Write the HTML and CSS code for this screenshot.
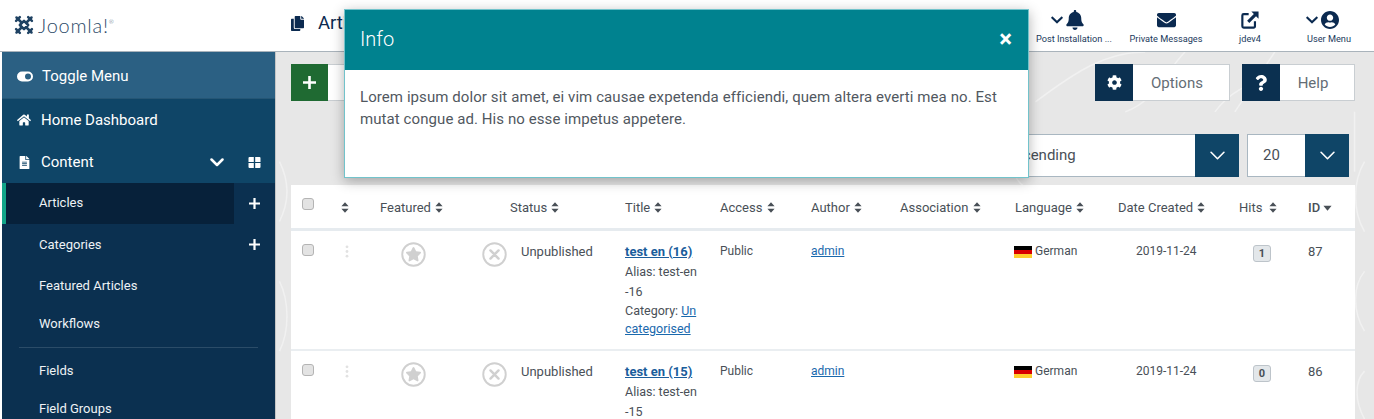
FILE: index.html
```html
<!DOCTYPE html>
<html lang="en">
<head>
<meta charset="utf-8">
<title>Articles</title>
<link rel="stylesheet" href="styles.css">
</head>
<body>
<svg class="defs" aria-hidden="true">
  <defs>
    <symbol id="i-chev" viewBox="0 0 448 512"><path d="M207.029 381.476L12.686 187.132c-9.373-9.373-9.373-24.569 0-33.941l22.667-22.667c9.357-9.357 24.522-9.375 33.901-.04L224 284.505l154.745-154.021c9.379-9.335 24.544-9.317 33.901.04l22.667 22.667c9.373 9.373 9.373 24.569 0 33.941L240.971 381.476c-9.373 9.372-24.569 9.372-33.942 0z"/></symbol>
    <symbol id="i-chev-thin" viewBox="0 0 14 8"><path d="M1 1l6 6 6-6" fill="none" stroke="currentColor" stroke-width="1.500" stroke-linecap="round" stroke-linejoin="round"/></symbol>
    <symbol id="i-chev-bold" viewBox="0 0 14 9"><path d="M1.500 1.500L7 7l5.500-5.500" fill="none" stroke="currentColor" stroke-width="2.500" stroke-linecap="round" stroke-linejoin="round"/></symbol>
    <symbol id="i-bell" viewBox="0 0 448 512"><path d="M224 512c35.32 0 63.97-28.65 63.97-64H160.03c0 35.35 28.65 64 63.97 64zm215.39-149.71c-19.32-20.76-55.47-51.99-55.47-154.29 0-77.7-54.48-139.9-127.94-155.16V32c0-17.67-14.32-32-31.98-32s-31.98 14.33-31.98 32v20.84C118.56 68.1 64.08 130.3 64.08 208c0 102.3-36.15 133.53-55.47 154.29-6 6.45-8.66 14.16-8.61 21.71.11 16.4 12.98 32 32.1 32h383.8c19.12 0 32-15.6 32.1-32 .05-7.55-2.61-15.27-8.61-21.71z"/></symbol>
    <symbol id="i-env" viewBox="0 0 512 512"><path d="M502.3 190.8c3.9-3.1 9.7-.2 9.7 4.7V400c0 26.5-21.5 48-48 48H48c-26.5 0-48-21.5-48-48V195.6c0-5 5.7-7.8 9.7-4.7 22.4 17.4 52.1 39.5 154.1 113.6 21.1 15.4 56.7 47.8 92.2 47.6 35.7.3 72-32.8 92.3-47.6 102-74.1 131.6-96.3 154-113.7zM256 320c23.2.4 56.6-29.2 73.4-41.4 132.7-96.3 142.8-104.7 173.4-128.7 5.8-4.5 9.2-11.5 9.2-18.9v-19c0-26.5-21.5-48-48-48H48C21.5 64 0 85.5 0 112v19c0 7.4 3.4 14.3 9.2 18.9 30.6 23.9 40.7 32.4 173.4 128.7 16.8 12.2 50.2 41.8 73.4 41.4z"/></symbol>
    <symbol id="i-user" viewBox="0 0 496 512"><path d="M248 8C111 8 0 119 0 256s111 248 248 248 248-111 248-248S385 8 248 8zm0 96c48.6 0 88 39.4 88 88s-39.4 88-88 88-88-39.4-88-88 39.4-88 88-88zm0 344c-58.7 0-111.3-26.6-146.5-68.2 18.8-35.4 55.6-59.8 98.5-59.8 2.4 0 4.8.4 7.1 1.1 13 4.2 26.6 6.9 40.9 6.9 14.3 0 28-2.7 40.9-6.9 2.3-.7 4.7-1.1 7.1-1.1 42.9 0 79.7 24.4 98.5 59.8C359.3 421.4 306.7 448 248 448z"/></symbol>
    <symbol id="i-ext" viewBox="0 0 20 20"><path d="M8.500 3.500H3a1.500 1.500 0 0 0-1.500 1.500v12A1.500 1.500 0 0 0 3 18.500h11a1.500 1.500 0 0 0 1.500-1.500v-5.500" fill="none" stroke="currentColor" stroke-width="2.400"/><path d="M11.500 0.500H19.500V8.500L16.700 5.700L9.200 13.200L6.800 10.800L14.300 3.300Z"/></symbol>
    <symbol id="i-cog" viewBox="0 0 512 512"><path d="M487.4 315.7l-42.6-24.6c4.3-23.2 4.3-47 0-70.2l42.6-24.6c4.9-2.8 7.1-8.6 5.500-14-11.1-35.6-30-67.8-54.7-94.6-3.8-4.1-10-5.1-14.8-2.3L380.8 110c-17.9-15.4-38.5-27.3-60.8-35.1V25.8c0-5.600-3.9-10.5-9.4-11.7-36.7-8.2-74.3-7.8-109.2 0-5.500 1.200-9.4 6.100-9.4 11.700V75c-22.2 7.900-42.8 19.800-60.8 35.100L88.700 85.500c-4.900-2.800-11-1.900-14.800 2.300-24.700 26.700-43.600 58.900-54.700 94.600-1.700 5.400.6 11.200 5.500 14L67.300 221c-4.300 23.200-4.300 47 0 70.200l-42.600 24.600c-4.900 2.800-7.100 8.600-5.500 14 11.100 35.600 30 67.800 54.700 94.600 3.800 4.100 10 5.100 14.800 2.300l42.600-24.600c17.900 15.400 38.500 27.300 60.800 35.100v49.200c0 5.600 3.900 10.500 9.400 11.700 36.700 8.200 74.300 7.800 109.200 0 5.500-1.200 9.400-6.100 9.400-11.700v-49.200c22.200-7.900 42.800-19.800 60.800-35.100l42.600 24.600c4.900 2.800 11 1.900 14.800-2.300 24.700-26.700 43.600-58.900 54.700-94.600 1.500-5.500-.7-11.300-5.600-14.100zM256 336c-44.100 0-80-35.900-80-80s35.900-80 80-80 80 35.900 80 80-35.900 80-80 80z"/></symbol>
    <symbol id="i-help" viewBox="0 0 384 512"><path d="M202.021 0C122.202 0 70.503 32.703 29.914 91.026c-7.363 10.58-5.093 25.086 5.178 32.874l43.138 32.709c10.373 7.865 25.132 6.026 33.253-4.148 25.049-31.381 43.63-49.449 82.757-49.449 30.764 0 68.816 19.799 68.816 49.631 0 22.552-18.617 34.134-48.993 51.164-35.423 19.86-82.299 44.576-82.299 106.405V320c0 13.255 10.745 24 24 24h72.471c13.255 0 24-10.745 24-24v-5.773c0-42.86 125.268-44.645 125.268-160.627C377.504 66.256 286.902 0 202.021 0zM192 373.459c-38.196 0-69.271 31.075-69.271 69.271 0 38.195 31.075 69.27 69.271 69.27s69.271-31.075 69.271-69.271-31.075-69.27-69.271-69.27z"/></symbol>
    <symbol id="i-home" viewBox="0 0 576 512"><path d="M280.37 148.26L96 300.11V464a16 16 0 0 0 16 16l112.06-.29a16 16 0 0 0 15.92-16V368a16 16 0 0 1 16-16h64a16 16 0 0 1 16 16v95.64a16 16 0 0 0 16 16.05L464 480a16 16 0 0 0 16-16V300L295.67 148.26a12.19 12.19 0 0 0-15.3 0zM571.6 251.47L488 182.56V44.05a12 12 0 0 0-12-12h-56a12 12 0 0 0-12 12v72.61L318.47 43a48 48 0 0 0-61 0L4.34 251.47a12 12 0 0 0-1.6 16.9l25.5 31A12 12 0 0 0 45.15 301l235.22-193.74a12.19 12.19 0 0 1 15.3 0L530.9 301a12 12 0 0 0 16.9-1.6l25.5-31a12 12 0 0 0-1.7-16.93z"/></symbol>
    <symbol id="i-file" viewBox="0 0 384 512"><path d="M224 136V0H24C10.7 0 0 10.7 0 24v464c0 13.3 10.7 24 24 24h336c13.3 0 24-10.7 24-24V160H248c-13.2 0-24-10.8-24-24zm64 236c0 6.6-5.4 12-12 12H108c-6.6 0-12-5.4-12-12v-8c0-6.6 5.4-12 12-12h168c6.6 0 12 5.4 12 12v8zm0-64c0 6.6-5.4 12-12 12H108c-6.6 0-12-5.4-12-12v-8c0-6.6 5.4-12 12-12h168c6.6 0 12 5.4 12 12v8zm0-72v8c0 6.6-5.4 12-12 12H108c-6.6 0-12-5.4-12-12v-8c0-6.6 5.4-12 12-12h168c6.6 0 12 5.4 12 12zm96-114.1v6.1H256V0h6.1c6.4 0 12.5 2.5 17 7l97.9 98c4.5 4.5 7 10.6 7 16.9z"/></symbol>
    <symbol id="i-copy" viewBox="0 0 448 512"><path d="M320 448v40c0 13.255-10.745 24-24 24H24c-13.255 0-24-10.745-24-24V120c0-13.255 10.745-24 24-24h72v296c0 30.879 25.121 56 56 56h168zm0-344V0H152c-13.255 0-24 10.745-24 24v368c0 13.255 10.745 24 24 24h272c13.255 0 24-10.745 24-24V128H344c-13.2 0-24-10.8-24-24zm120.971-31.029L375.029 7.029A24 24 0 0 0 358.059 0H352v96h96v-6.059a24 24 0 0 0-7.029-16.97z"/></symbol>
    <symbol id="i-plus" viewBox="0 0 12 12"><path d="M4.800 0h2.400v4.800H12v2.400H7.200V12H4.800V7.200H0V4.800h4.800z"/></symbol>
    <symbol id="i-grid" viewBox="0 0 12 11"><path d="M0 1a1 1 0 0 1 1-1h4.300v4.900H0zM6.700 0H11a1 1 0 0 1 1 1v3.900H6.700zM0 6.100h5.300V11H1a1 1 0 0 1-1-1zM6.700 6.100H12V10a1 1 0 0 1-1 1H6.700z"/></symbol>
    <symbol id="i-toggle" viewBox="0 0 16 10"><path fill-rule="evenodd" d="M5 0h6a5 5 0 0 1 0 10H5A5 5 0 0 1 5 0zm6 2a3 3 0 1 0 0 6 3 3 0 0 0 0-6z"/></symbol>
    <symbol id="i-sort" viewBox="0 0 10 13"><path d="M5 0L9.500 5H.5zM5 13L.5 8h9z"/></symbol>
    <symbol id="i-desc" viewBox="0 0 10 6"><path d="M5 6L.5 .5h9z"/></symbol>
    <symbol id="i-star" viewBox="0 0 26 26"><circle cx="13" cy="13" r="11.700" fill="none" stroke="currentColor" stroke-width="2"/><path transform="translate(4.600 5.200) scale(.0292)" d="M259.3 17.8L194 150.2 47.9 171.5c-26.2 3.8-36.7 36.1-17.7 54.6l105.7 103-25 145.5c-4.5 26.3 23.2 46 46.4 33.7L288 439.6l130.700 68.700c23.200 12.200 50.900-7.400 46.400-33.700l-25-145.500 105.700-103c19-18.500 8.500-50.800-17.700-54.600L382 150.200 316.700 17.800c-11.700-23.600-45.600-23.900-57.400 0z"/></symbol>
    <symbol id="i-x" viewBox="0 0 26 26"><circle cx="13" cy="13" r="11.700" fill="none" stroke="currentColor" stroke-width="2"/><path d="M8.800 8.800L17.200 17.200M17.200 8.800L8.800 17.200" fill="none" stroke="currentColor" stroke-width="2.600" stroke-linecap="round"/></symbol>
    <symbol id="i-grip" viewBox="0 0 4 14"><circle cx="2" cy="2" r="1.500"/><circle cx="2" cy="7" r="1.500"/><circle cx="2" cy="12" r="1.500"/></symbol>
    <symbol id="i-flag" viewBox="0 0 18 12"><rect width="18" height="4" fill="#000"/><rect y="4" width="18" height="4" fill="#d80000"/><rect y="8" width="18" height="4" fill="#ffce2e"/></symbol>
  </defs>
</svg>

<header class="topbar">
  <div class="brand">
    <svg class="brand-mark" viewBox="0 0 24 24" aria-hidden="true">
      <g fill="none" stroke="#1f4263" stroke-width="3" stroke-linecap="round" stroke-linejoin="round">
        <path d="M12 7L17 12L12 17L7 12Z"/>
        <path d="M3 3L9 9M21 3L15 9M3 21L9 15M21 21L15 15"/>
        <path d="M2.500 7L7 2.500M17 2.500L21.500 7M2.500 17L7 21.500M17 21.500L21.500 17"/>
      </g>
    </svg>
    <span class="brand-name">Joomla!<sup class="brand-reg">®</sup></span>
  </div>
  <div class="page-title">
    <svg class="page-title-icon"><use href="#i-copy"/></svg>
    <h1>Articles</h1>
  </div>
  <nav class="top-links">
    <a class="top-link top-link-post"><span class="top-icons top-icons-shift"><svg class="top-chev"><use href="#i-chev"/></svg><svg class="top-icon"><use href="#i-bell"/></svg></span><span class="top-label">Post Installation ...</span></a>
    <a class="top-link top-link-msg"><span class="top-icons"><svg class="top-icon top-icon-env"><use href="#i-env"/></svg></span><span class="top-label">Private Messages</span></a>
    <a class="top-link top-link-site"><span class="top-icons"><svg class="top-icon"><use href="#i-ext"/></svg></span><span class="top-label">jdev4</span></a>
    <a class="top-link top-link-user"><span class="top-icons top-icons-shift"><svg class="top-chev"><use href="#i-chev"/></svg><svg class="top-icon"><use href="#i-user"/></svg></span><span class="top-label">User Menu</span></a>
  </nav>
</header>

<div class="layout">
  <aside class="sidebar">
    <div class="toggle-item"><svg class="side-icon toggle-icon"><use href="#i-toggle"/></svg>Toggle Menu</div>
    <div class="main-nav">
      <div class="nav-item nav-home"><svg class="side-icon"><use href="#i-home"/></svg>Home Dashboard</div>
      <div class="nav-item nav-content"><svg class="side-icon side-icon-file"><use href="#i-file"/></svg>Content
        <svg class="nav-chev"><use href="#i-chev-bold"/></svg>
        <svg class="nav-grid"><use href="#i-grid"/></svg>
      </div>
    </div>
    <ul class="sub-nav">
      <li class="sub-item sub-active"><span class="sub-label">Articles</span><span class="sub-add"><svg class="plus"><use href="#i-plus"/></svg></span></li>
      <li class="sub-item sub-cat"><span class="sub-label">Categories</span><span class="sub-add"><svg class="plus"><use href="#i-plus"/></svg></span></li>
      <li class="sub-item sub-feat"><span class="sub-label">Featured Articles</span></li>
      <li class="sub-item sub-flow"><span class="sub-label">Workflows</span></li>
      <li class="sub-divider"></li>
      <li class="sub-item sub-fields"><span class="sub-label">Fields</span></li>
      <li class="sub-item sub-groups"><span class="sub-label">Field Groups</span></li>
    </ul>
  </aside>

  <main class="content">
    <svg class="pattern" viewBox="0 0 1098 368" aria-hidden="true">
      <g fill="none" stroke="#f1f1f1" stroke-width="1.500">
        <path d="M760 50c40-30 70-50 110-50M850 60c30-10 40-40 60-60M1000 0l-40 60M760 90c-30 10-30 50 10 50M940 60c30-40 80-40 120-20M1080 60v60"/>
        <path d="M1090 110c-12 20-12 50 0 70M1090 220c-12 15-12 40 0 60M1090 320c-10 10-10 30 0 48"/>
        <path d="M2 110c10 20 10 40 0 60M2 230c10 20 10 50 0 70"/>
      </g>
    </svg>
    <div class="toolbar">
      <div class="btn btn-new"><span class="btn-add"><svg class="plus plus-new"><use href="#i-plus"/></svg></span><span class="btn-new-label">New</span></div>
      <div class="btn btn-options"><span class="btn-icon"><svg class="icon-cog"><use href="#i-cog"/></svg></span><span class="btn-text">Options</span></div>
      <div class="btn btn-help"><span class="btn-icon"><svg class="icon-help"><use href="#i-help"/></svg></span><span class="btn-text">Help</span></div>
    </div>
    <div class="filters">
      <div class="select select-sort"><span class="select-text">ID descending</span><span class="select-arrow"><svg class="arrow"><use href="#i-chev-thin"/></svg></span></div>
      <div class="select select-limit"><span class="select-text select-text-limit">20</span><span class="select-arrow"><svg class="arrow"><use href="#i-chev-thin"/></svg></span></div>
    </div>
    <table class="articles">
      <colgroup>
        <col class="c-check"><col class="c-grip"><col class="c-feat"><col class="c-status"><col class="c-title"><col class="c-access"><col class="c-author"><col class="c-assoc"><col class="c-lang"><col class="c-date"><col class="c-hits"><col class="c-id">
      </colgroup>
      <thead>
        <tr>
          <th class="cell-check"><span class="check"></span></th>
          <th class="cell-grip-head"><svg class="sort"><use href="#i-sort"/></svg></th>
          <th class="head-feat">Featured <svg class="sort"><use href="#i-sort"/></svg></th>
          <th class="head-status">Status <svg class="sort"><use href="#i-sort"/></svg></th>
          <th>Title <svg class="sort"><use href="#i-sort"/></svg></th>
          <th>Access <svg class="sort"><use href="#i-sort"/></svg></th>
          <th>Author <svg class="sort"><use href="#i-sort"/></svg></th>
          <th>Association <svg class="sort"><use href="#i-sort"/></svg></th>
          <th>Language <svg class="sort"><use href="#i-sort"/></svg></th>
          <th>Date Created <svg class="sort"><use href="#i-sort"/></svg></th>
          <th>Hits <svg class="sort sort-hits"><use href="#i-sort"/></svg></th>
          <th class="head-id">ID <svg class="desc"><use href="#i-desc"/></svg></th>
        </tr>
      </thead>
      <tbody>
        <tr class="row-first">
          <td class="cell-check"><span class="check"></span></td>
          <td class="cell-grip"><svg class="grip"><use href="#i-grip"/></svg></td>
          <td class="cell-feat"><svg class="state"><use href="#i-star"/></svg></td>
          <td><span class="status"><svg class="state"><use href="#i-x"/></svg><span>Unpublished</span></span></td>
          <td class="cell-title"><a class="title-link">test en (16)</a><div class="meta">Alias: test-en<br>-16</div><div class="meta meta-cat">Category: <a class="link">Un<br>categorised</a></div></td>
          <td class="small">Public</td>
          <td class="small"><a class="link">admin</a></td>
          <td></td>
          <td class="small"><span class="lang"><svg class="flag"><use href="#i-flag"/></svg>German</span></td>
          <td class="small date">2019-11-24</td>
          <td class="hits"><span class="badge">1</span></td>
          <td class="id">87</td>
        </tr>
        <tr>
          <td class="cell-check"><span class="check"></span></td>
          <td class="cell-grip"><svg class="grip"><use href="#i-grip"/></svg></td>
          <td class="cell-feat"><svg class="state"><use href="#i-star"/></svg></td>
          <td><span class="status"><svg class="state"><use href="#i-x"/></svg><span>Unpublished</span></span></td>
          <td class="cell-title"><a class="title-link">test en (15)</a><div class="meta">Alias: test-en<br>-15</div></td>
          <td class="small">Public</td>
          <td class="small"><a class="link">admin</a></td>
          <td></td>
          <td class="small"><span class="lang"><svg class="flag"><use href="#i-flag"/></svg>German</span></td>
          <td class="small date">2019-11-24</td>
          <td class="hits"><span class="badge">0</span></td>
          <td class="id">86</td>
        </tr>
      </tbody>
    </table>
  </main>
</div>

<section class="modal" role="dialog" aria-label="Info">
  <div class="modal-head"><h2>Info</h2><span class="modal-close">&times;</span></div>
  <p class="modal-body">Lorem ipsum dolor sit amet, ei vim causae expetenda efficiendi, quem altera everti mea no. Est mutat congue ad. His no esse impetus appetere.</p>
</section>
</body>
</html>
```

FILE: styles.css
```css
* { box-sizing: border-box; }
html, body { margin: 0; height: 419px; overflow: hidden; }
body { font-family: Roboto, "Liberation Sans", sans-serif; background: #fff; color: #495057; display: flex; flex-direction: column; position: relative; }
svg { fill: currentColor; display: inline-block; }
.defs { position: absolute; width: 0; height: 0; }

/* top bar */
.topbar { height: 52px; flex: none; display: flex; align-items: center; background: #fff; border-bottom: 1px solid #a9b3bb; color: #0b2a50; }
.brand { width: 291px; flex: none; padding: 0 0 1px 14px; display: flex; align-items: center; gap: 4px; }
.brand-mark { width: 20px; height: 20px; }
.brand-name { font-family: Lato, sans-serif; font-weight: 300; font-size: 20px; line-height: 20px; color: #2b4a68; letter-spacing: .75px; }
.brand-reg { font-size: 6px; vertical-align: 9px; line-height: 0; }
.page-title { display: flex; align-items: center; gap: 14px; flex: 1; padding-bottom: 5px; }
.page-title-icon { width: 13px; height: 15px; }
.page-title h1 { margin: 0; font-size: 18.500px; font-weight: 400; color: #0b2a50; }
.top-links { display: flex; height: 100%; padding-right: 3px; }
.top-link { display: flex; flex-direction: column; align-items: center; padding-top: 9px; }
.top-link-post { width: 90px; }
.top-link-msg { width: 94px; }
.top-link-site { width: 74px; }
.top-link-user { width: 84px; }
.top-icons { height: 21px; display: flex; align-items: center; gap: 3px; }
.top-icons-shift { margin-right: 14px; }
.top-icon { width: 18px; height: 20px; }
.top-icon-env { width: 19px; }
.top-chev { width: 12px; height: 14px; }
.top-label { margin-top: 3px; font-size: 9.200px; line-height: 12px; white-space: nowrap; color: #1b3a5c; }

/* layout */
.layout { flex: 1; min-height: 0; display: flex; }
.sidebar { width: 276px; flex: none; padding-left: 2px; background: #fff; display: flex; flex-direction: column; color: #fff; border-right: 1px solid #c5c5c5; }
.side-icon { width: 14px; height: 14px; margin-right: 10px; flex: none; }
.toggle-item { height: 47px; flex: none; display: flex; align-items: center; padding: 2px 0 0 15px; font-size: 15px; background: #2b6083; border-bottom: 1px solid #255675; }
.toggle-icon { width: 16px; height: 11px; margin-right: 9px; }
.main-nav { height: 84px; flex: none; background: #0f4567; }
.nav-item { height: 42px; display: flex; align-items: center; padding-left: 15px; font-size: 15px; }
.side-icon-file { width: 11px; height: 13px; margin-left: 2px; margin-right: 11px; }
.nav-chev { width: 14px; height: 9px; margin-left: auto; margin-right: 24px; }
.nav-grid { width: 13px; height: 11px; margin-right: 14px; }
.sub-nav { list-style: none; margin: 0; padding: 0; flex: 1; background: #0b3050; }
.sub-item { display: flex; align-items: stretch; font-size: 13px; color: #eef2f5; }
.sub-label { flex: 1; display: flex; align-items: center; padding-left: 37px; }
.sub-add { width: 41px; display: flex; align-items: center; justify-content: center; }
.plus { width: 11px; height: 11px; fill: #fff; }
.sub-active { height: 41px; }
.sub-active .sub-label { background: #07213a; border-left: 4px solid #12a589; padding-left: 33px; padding-bottom: 3px; }
.sub-cat { height: 42px; padding-bottom: 2px; }
.sub-feat { height: 40px; padding-bottom: 2px; }
.sub-flow { height: 41px; padding-bottom: 7px; }
.sub-divider { height: 1px; margin: 0 17px; background: #2b4c68; }
.sub-fields { height: 42px; padding-top: 2px; }
.sub-groups { height: 36px; }

/* content */
.content { flex: 1; min-width: 0; background: #e7e7e7; position: relative; padding: 12px 19px 0 15px; overflow: hidden; }
.pattern { position: absolute; left: 0; top: 0; width: 100%; height: 100%; }
.toolbar { position: relative; display: flex; height: 37px; }
.btn { display: flex; background: #fff; border: 1px solid #c9ced2; height: 37px; }
.btn-new { width: 120px; margin-right: auto; }
.btn-add { width: 37px; margin: -1px 0 -1px -1px; background: #1f6a32; display: flex; align-items: center; justify-content: center; }
.plus-new { width: 13px; height: 13px; }
.btn-new-label { padding: 9px 14px 9px 30px; font-size: 15px; }
.btn-options { width: 135px; margin-right: 12px; }
.btn-help { width: 113px; }
.btn-icon { width: 38px; margin: -1px 0 -1px -1px; background: #0b3050; color: #fff; display: flex; align-items: center; justify-content: center; }
.icon-cog { width: 15px; height: 15px; }
.icon-help { width: 12px; height: 16px; }
.btn-text { flex: 1; text-align: center; padding-right: 8px; font-size: 15px; line-height: 37px; color: #646d75; }
.filters { position: relative; display: flex; justify-content: flex-end; gap: 8px; margin-top: 33px; padding-right: 6px; }
.select { display: flex; height: 43px; background: #fff; border: 1px solid #a9b7c1; }
.select-sort { width: 270px; }
.select-limit { width: 102px; }
.select-text { flex: 1; font-size: 15px; line-height: 41px; color: #495057; padding-left: 11px; }
.select-text-limit { padding-left: 15px; }
.select-arrow { width: 44px; margin: -1px -1px -1px 0; background: #0f4567; color: #fff; display: flex; align-items: center; justify-content: center; }
.arrow { width: 15px; height: 9px; }

/* table */
.articles { position: relative; margin-top: 8px; width: 1064px; table-layout: fixed; border-collapse: collapse; background: #fff; font-size: 13px; }
.c-check { width: 39px; } .c-grip { width: 40px; } .c-feat { width: 100px; } .c-status { width: 143px; } .c-title { width: 95px; }
.c-access { width: 91px; } .c-author { width: 89px; } .c-assoc { width: 115px; } .c-lang { width: 103px; } .c-date { width: 121px; } .c-hits { width: 69px; } .c-id { width: 59px; }
th { height: 44px; padding: 2px 0 0 12px; font-weight: 400; text-align: left; font-size: 13px; color: #495057; white-space: nowrap; border-bottom: 3px solid #e6ebef; }
td { padding: 13px 0 0 12px; vertical-align: top; border-bottom: 2px solid #eaeef1; color: #495057; }
.row-first td { height: 121px; }
th.head-feat { padding-left: 10px; }
th.head-status { padding-left: 40px; }
th.head-id { font-weight: 500; }
td.cell-feat { padding-left: 31px; }
th.cell-check { vertical-align: top; padding: 13px 0 0 11px; }
td.cell-check { padding: 13px 0 0 11px; }
.cell-grip-head { padding-left: 10px; }
.check { display: block; width: 12px; height: 12px; background: #e3e3e3; border: 1px solid #b4b4b4; border-radius: 3px; }
.sort { width: 8px; height: 11px; vertical-align: -1px; margin-left: 1px; }
.sort-hits { margin-left: 3px; }
.desc { width: 9px; height: 6px; vertical-align: 1px; }
.grip { width: 4px; height: 13px; color: #e2e2e2; display: block; }
td.cell-grip { padding: 14px 0 0 15px; }
.state { width: 25px; height: 25px; color: #d0d0d0; display: inline-block; }
td.cell-feat .state { margin-top: -2px; }
.status { display: flex; gap: 14px; font-size: 13px; line-height: 16px; }
.status .state { margin-top: -2px; flex: none; }
td.cell-title { line-height: 20px; padding-top: 11px; }
.title-link { font-weight: 700; color: #1a5d9c; text-decoration: underline; font-size: 13px; }
.meta { font-size: 12.500px; line-height: 20px; }
.meta-cat { line-height: 18px; }
.link { color: #1a69ad; text-decoration: underline; }
.small { font-size: 12px; }
.lang { display: flex; align-items: flex-start; gap: 3px; line-height: 15px; margin-left: -1px; }
.flag { width: 18px; height: 12px; margin-top: 2px; }
td.date { padding-left: 30px; }
td.hits { padding-left: 26px; padding-top: 14px; }
.badge { display: block; width: 18px; height: 17px; text-align: center; font-size: 11px; font-weight: 700; line-height: 15px; background: #e3e7ea; border: 1px solid #bdc4ca; border-radius: 3px; }
.id { font-size: 13px; }

/* modal */
.modal { position: absolute; left: 344px; top: 9px; width: 685px; height: 169px; background: #fff; border: 1px solid #72c3cb; box-shadow: 0 3px 12px rgba(0,0,0,.3); }
.modal-head { height: 60px; background: #00828f; color: #fff; display: flex; align-items: center; justify-content: space-between; padding: 0 16px 3px 15px; }
.modal-head h2 { margin: 0; font-size: 20px; font-weight: 300; }
.modal-close { font-size: 24px; font-weight: 700; line-height: 1; }
.modal-body { margin: 0; padding: 16px 15px 15px; font-size: 15px; letter-spacing: .08px; line-height: 22px; color: #51585f; }
```
